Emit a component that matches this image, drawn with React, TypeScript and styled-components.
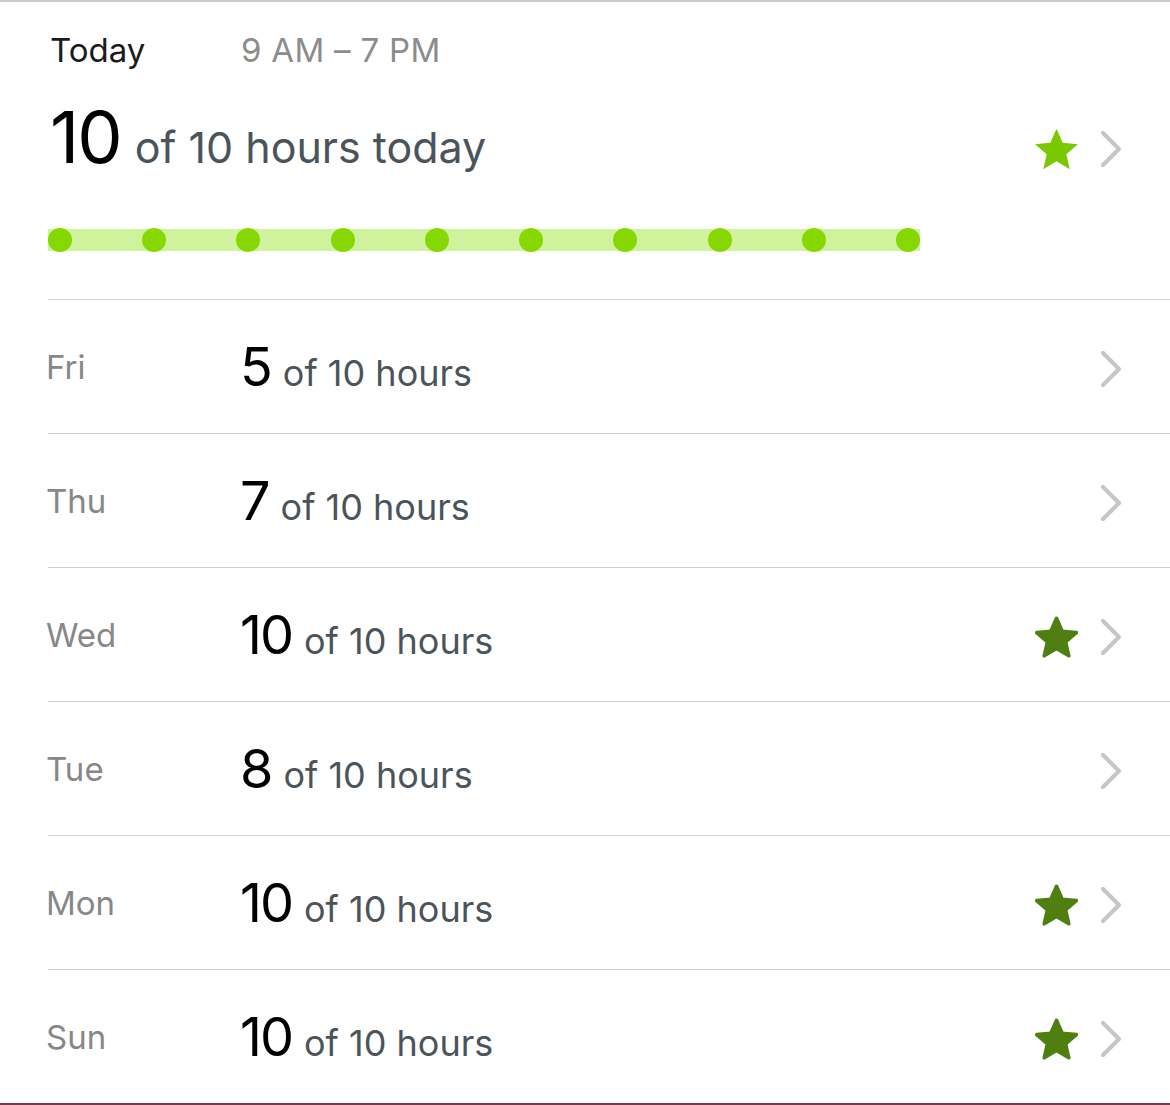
import styled, { createGlobalStyle } from "styled-components";

const GlobalStyle = createGlobalStyle`
  html, body {
    margin: 0;
    padding: 0;
    background: #ffffff;
  }
  body {
    font-family: Inter, "Liberation Sans", sans-serif;
    -webkit-font-smoothing: antialiased;
  }
`;

const Screen = styled.div`
  width: 1170px;
  height: 1105px;
  box-sizing: border-box;
  border-top: 2px solid #c9c9c9;
  border-bottom: 2px solid #7a3a4b;
  background: #fff;
  overflow: hidden;
`;

const TodaySection = styled.section`
  padding: 26px 0 48px 50px;
`;

const TodayHeader = styled.div`
  display: flex;
  align-items: baseline;
  height: 44px;
  line-height: 44px;
`;

const TodayLabel = styled.span`
  width: 191px;
  font-size: 33px;
  color: #1b1b1b;
`;

const TimeRange = styled.span`
  font-size: 33px;
  color: #8c8c8c;
  letter-spacing: 0.3px;
`;

const SummaryRow = styled.div`
  display: flex;
  align-items: center;
  margin-top: 29px;
  padding-right: 48px;
`;

const Amount = styled.div<{ $gap: number }>`
  flex: 1;
  display: flex;
  align-items: baseline;
  gap: ${(p) => p.$gap}px;
`;

const BigNumber = styled.span<{ $size: number }>`
  font-size: ${(p) => p.$size}px;
  line-height: 1;
  color: #000;
  letter-spacing: -2px;
`;

const Unit = styled.span<{ $size: number }>`
  font-size: ${(p) => p.$size}px;
  line-height: 1;
  color: #4b545a;
`;

const Accessory = styled.div<{ $drop: number }>`
  display: flex;
  align-items: center;
  gap: 22px;
  margin-top: ${(p) => p.$drop}px;
`;

const Track = styled.div`
  display: flex;
  justify-content: space-between;
  align-items: center;
  width: 872px;
  height: 22px;
  margin-top: 56px;
  margin-left: -2px;
  background: #cff29c;
`;

const Dot = styled.span`
  width: 24px;
  height: 24px;
  border-radius: 50%;
  background: #86d900;
`;

const DayList = styled.ul`
  list-style: none;
  margin: 0 0 0 48px;
  padding: 0;
`;

const DayRow = styled.li`
  display: flex;
  align-items: center;
  height: 133px;
  padding-right: 48px;
  border-top: 1px solid #cfcfcf;
`;

const DayName = styled.span`
  width: 194px;
  margin-left: -2px;
  padding-top: 1px;
  font-size: 33px;
  color: #878787;
`;

function Star({ dark }: { dark?: boolean }) {
  const fill = dark ? "#4f7f10" : "#79c800";
  return (
    <svg
      width="43"
      height="42"
      viewBox={dark ? "1.2 1.3 21.6 20.6" : "2 2.1 20 19.1"}
    >
      <path
        d="M12 2.2l2.85 6.55 7.1.65-5.38 4.7 1.6 6.95L12 17.4l-6.17 3.65 1.6-6.95-5.38-4.7 7.1-.65z"
        fill={fill}
        stroke={dark ? fill : "none"}
        strokeWidth={dark ? 1.8 : 0}
        strokeLinejoin="round"
      />
    </svg>
  );
}

function Chevron() {
  return (
    <svg width="22" height="38" viewBox="0 0 22 38">
      <polyline
        points="3,3 19,19 3,35"
        fill="none"
        stroke="#c6c6c9"
        strokeWidth="4.2"
        strokeLinecap="round"
        strokeLinejoin="round"
      />
    </svg>
  );
}

const SpacerStar = styled.span`
  width: 43px;
  height: 42px;
`;

const days = [
  { name: "Fri", hours: 5 },
  { name: "Thu", hours: 7 },
  { name: "Wed", hours: 10 },
  { name: "Tue", hours: 8 },
  { name: "Mon", hours: 10 },
  { name: "Sun", hours: 10 },
];

export default function App() {
  return (
    <>
      <GlobalStyle />
      <Screen>
        <TodaySection>
          <TodayHeader>
            <TodayLabel>Today</TodayLabel>
            <TimeRange>9 AM – 7 PM</TimeRange>
          </TodayHeader>
          <SummaryRow>
            <Amount $gap={14}>
              <BigNumber $size={72}>10</BigNumber>
              <Unit $size={43}>of 10 hours today</Unit>
            </Amount>
            <Accessory $drop={24}>
              <Star />
              <Chevron />
            </Accessory>
          </SummaryRow>
          <Track>
            {Array.from({ length: 10 }).map((_, i) => (
              <Dot key={i} />
            ))}
          </Track>
        </TodaySection>
        <DayList>
          {days.map((d) => (
            <DayRow key={d.name}>
              <DayName>{d.name}</DayName>
              <Amount $gap={12}>
                <BigNumber $size={54}>{d.hours}</BigNumber>
                <Unit $size={36}>of 10 hours</Unit>
              </Amount>
              <Accessory $drop={4}>
                {d.hours >= 10 ? <Star dark /> : <SpacerStar />}
                <Chevron />
              </Accessory>
            </DayRow>
          ))}
        </DayList>
      </Screen>
    </>
  );
}
